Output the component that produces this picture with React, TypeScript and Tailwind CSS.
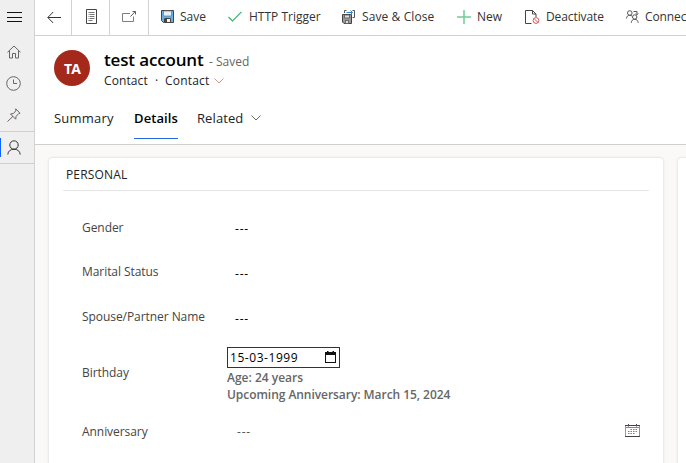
import React from "react";

const Hamburger = () => (
  <svg width="15" height="11" viewBox="0 0 15 11" className="block" shapeRendering="crispEdges">
    <path d="M0 .5h15M0 5.5h15M0 9.5h15" stroke="#111" />
  </svg>
);
const HomeIcon = () => (
  <svg width="14" height="14" viewBox="0 0 14 14" fill="none" stroke="#666" className="block">
    <path d="M.5 7.300 7 1l6.500 6.300M2.500 5.800v7.200h3V8.500h3V13h3V5.800" />
  </svg>
);
const ClockIcon = () => (
  <svg width="15" height="15" viewBox="0 0 15 15" fill="none" stroke="#666" className="block">
    <circle cx="7.500" cy="7.500" r="6.800" />
    <path d="M7.500 3.500v4h3.500" />
  </svg>
);
const PinIcon = () => (
  <svg width="14" height="14" viewBox="0 0 14 14" fill="none" stroke="#6b625f" className="block">
    <path d="M8.700.8 13 5.200l-1.200.3-2.700 2.800-.4 2.900-5.200-5.200 3-.5 2.300-2.700zM6 8.300.5 13.500" />
  </svg>
);
const PersonIcon = () => (
  <svg width="14" height="15" viewBox="0 0 14 15" fill="none" stroke="#333" className="block">
    <circle cx="7" cy="5" r="4.200" />
    <path d="M.8 14.500C1 11.200 3.500 9.200 7 9.200s6 2 6.200 5.300" />
  </svg>
);
const BackIcon = () => (
  <svg width="14" height="12" viewBox="0 0 14 12" fill="none" stroke="#333" className="block">
    <path d="M14 6.500H1M6.200 1 .8 6.500 6.200 12" />
  </svg>
);
const FormIcon = () => (
  <svg width="12" height="15" viewBox="0 0 12 15" fill="none" stroke="#444" className="block">
    <path d="M.5.5h10v14H.5z" />
    <path d="M2.500 3.500h6M2.500 5.500h1M4 5.500h4.500M2.500 7.500h1M4 7.500h4.500M2.500 9.500h1M4 9.500h4.500M2.500 11.500h4" stroke="#777" />
  </svg>
);
const PopoutIcon = () => (
  <svg width="14" height="11" viewBox="0 0 14 11" fill="none" stroke="#605a60" className="block">
    <path d="M8 2.500H.5v8h11V5.500" stroke="#837b80" />
    <path d="M8.500 5.500 13 .8M10.500.5h3V3.500" />
  </svg>
);
const SaveIcon = () => (
  <svg width="13" height="13" viewBox="0 0 13 13" fill="none" className="block">
    <path d="M.5.5h12v12H2.500l-2-2z" fill="#69afe5" stroke="#444" />
    <path d="M2.500 1h8v5h-8z" fill="#e4f0fa" stroke="#777" strokeWidth=".7" />
    <path d="M3.500 8.500h6v4h-6z" fill="#f5f5f5" stroke="#444" />
    <path d="M4 9h2v3.500H4z" fill="#444" />
  </svg>
);
const CheckIcon = () => (
  <svg width="14" height="11" viewBox="0 0 14 11" fill="none" stroke="#33b56a" strokeWidth="1.200" className="block">
    <path d="m.5 6 4 4L13.500.8" />
  </svg>
);
const SaveCloseIcon = () => (
  <svg width="14" height="14" viewBox="0 0 14 14" fill="none" className="block">
    <path d="M.5 4.500h9v9H2l-1.500-1.500z" fill="#999" stroke="#444" />
    <path d="M2.500 5h5v3h-5zM3.500 10.500h3v3h-3z" fill="#ddd" stroke="#555" strokeWidth=".8" />
    <path d="M2.500 3V.5h2M10.500.5h2v7h-2" stroke="#555" />
    <path d="M4.500 2.500h6M8.500.5l2 2-2 2" stroke="#2f83c9" />
  </svg>
);
const PlusIcon = () => (
  <svg width="14" height="14" viewBox="0 0 14 14" className="block">
    <path d="M7 0v14M0 7h14" stroke="#72cb96" strokeWidth="1.500" />
  </svg>
);
const DeactivateIcon = () => (
  <svg width="15" height="14" viewBox="0 0 15 14" fill="none" className="block">
    <path d="M6.500 13.500h-6V.5h7l3.500 3.500v3M7.500.5V4H11" stroke="#444" />
    <circle cx="11" cy="10.500" r="2.900" stroke="#e25555" />
    <path d="m9 8.500 4 4" stroke="#e25555" />
  </svg>
);
const ConnectIcon = () => (
  <svg width="13" height="13" viewBox="0 0 13 13" fill="none" stroke="#555" className="block">
    <circle cx="3.800" cy="3" r="2.300" />
    <path d="M.5 8.500c0-2 1.300-3.200 3.300-3.200 1 0 1.700.3 2.200.8" />
    <circle cx="8.700" cy="7" r="2.200" />
    <path d="M5.300 12.800c.1-2.200 1.400-3.500 3.400-3.500s3.300 1.300 3.500 3.500M7.500 1.500H11v3M9.800 3.500 11 4.800l1.300-1.300" />
  </svg>
);
const Chevron = ({ color }: { color: string }) => (
  <svg width="10" height="6" viewBox="0 0 10 6" fill="none" stroke={color} className="block">
    <path d="M.5.5 5 5 9.500.5" />
  </svg>
);
const DatePickerIcon = () => (
  <svg width="11" height="12" viewBox="0 0 11 12" className="block">
    <path d="M2 0h1.500v1h4V0H9v1h2v11H0V1h2zM1 4v7h9V4z" fill="#111" fillRule="evenodd" />
  </svg>
);
const CalendarIcon = () => (
  <svg width="15" height="13" viewBox="0 0 15 13" fill="none" className="block">
    <path d="M.5 1v12" stroke="#c98f55" />
    <path d="M14.500 1v12" stroke="#5d9fd0" />
    <path d="M0 1.500h15M0 12.500h15" stroke="#444" />
    <path d="M1 3.500h13" stroke="#888" />
    <path d="M3.500 0v2.500M11.500 0v2.500" stroke="#54415c" />
    <path d="M5.500 5.500h7M3 7.500h9.500M3 9.500h7" stroke="#7a7a9a" strokeDasharray="1.500 1" />
  </svg>
);

type CommandProps = { icon: React.ReactNode; label: string; box: string; text: string };
const Command = ({ icon, label, box, text }: CommandProps) => (
  <button className={`flex h-full shrink-0 items-center whitespace-nowrap ${box}`}>
    <span className="w-[19px] shrink-0">{icon}</span>
    <span className={text}>{label}</span>
  </button>
);

type FieldProps = { label: string; row: string; text: string; children: React.ReactNode };
const Field = ({ label, row, text, children }: FieldProps) => (
  <div className={`flex pl-[33px] pr-[23px] ${row}`}>
    <span className={`w-[145px] shrink-0 whitespace-nowrap tracking-[-0.06px] text-[#444] ${text}`}>{label}</span>
    {children}
  </div>
);

export default function App() {
  return (
    <div className="flex h-[463px] w-[686px] overflow-hidden bg-white font-['Open_Sans','Noto_Sans',sans-serif] text-[12px] leading-4 text-[#333]">
      <nav className="flex w-[35px] shrink-0 flex-col border-r border-[#d2d2d2] bg-[#efefef]">
        <div className="flex h-[35px] items-center pl-[7px]"><Hamburger /></div>
        <div className="flex h-[34px] items-center pl-[7px]"><HomeIcon /></div>
        <div className="flex h-7 items-center pl-[6px]"><ClockIcon /></div>
        <div className="flex h-[34px] items-center pl-[7px] pt-px"><PinIcon /></div>
        <div className="flex h-[33px] items-center border-y border-[#cfcfcf]">
          <span className="h-[19px] w-px bg-[#0f62fe]" />
          <span className="pb-px pl-[6px]"><PersonIcon /></span>
        </div>
      </nav>

      <main className="flex w-[651px] shrink-0 flex-col">
        <div className="flex h-9 shrink-0 overflow-hidden border-b border-[#d2d2d2]">
          <div className="flex w-[37px] shrink-0 items-center border-r border-[#d2d2d2] pb-[2px] pl-3"><BackIcon /></div>
          <div className="flex w-[38px] shrink-0 items-center border-r border-[#d2d2d2] pb-[2px] pl-[14px]"><FormIcon /></div>
          <div className="flex w-[39px] shrink-0 items-center border-r border-[#d2d2d2] pb-[2px] pl-3"><PopoutIcon /></div>
          <div className="flex shrink-0 pb-[2px] pl-3">
            <Command icon={<SaveIcon />} label="Save" box="w-[67px]" text="" />
            <Command icon={<CheckIcon />} label="HTTP Trigger" box="w-[114px] gap-[2px]" text="" />
            <Command icon={<SaveCloseIcon />} label="Save & Close" box="w-[115px] gap-px" text="tracking-[0.1px]" />
            <Command icon={<PlusIcon />} label="New" box="w-[68px] gap-px" text="" />
            <Command icon={<DeactivateIcon />} label="Deactivate" box="w-[101px] gap-[2px]" text="tracking-[-0.1px]" />
            <Command icon={<ConnectIcon />} label="Connec" box="w-[62px]" text="tracking-[-0.1px]" />
          </div>
        </div>

        <header className="h-[109px] shrink-0 border-b border-[#cfcfcf] pl-[19px] pt-[14px]">
          <div className="flex h-9">
            <div className="flex size-9 items-center justify-center rounded-full bg-[#a4291b] pt-px text-[14px] font-bold tracking-[-0.8px] text-white">TA</div>
            <div className="ml-[14px] flex flex-col">
              <div className="flex h-5 shrink-0 items-center whitespace-nowrap">
                <h1 className="w-[105px] pb-px text-[17px] font-semibold tracking-[-0.15px] text-black">test account</h1>
                <span className="pt-[3px] text-[#666]">- Saved</span>
              </div>
              <div className="mt-[3px] flex h-4 shrink-0 items-center text-[#222]">
                <span className="w-[51px] tracking-[0.1px]">Contact</span>
                <span className="w-[10px]">·</span>
                <span className="w-[49px] tracking-[0.2px]">Contact</span>
                <Chevron color="#d09a88" />
              </div>
            </div>
          </div>
          <div className="mt-[22px] flex h-[31px] text-[13px] leading-5 text-[#222]">
            <span className="w-20 tracking-[0.2px]">Summary</span>
            <span className="w-11 border-b border-[#2266e3] font-semibold tracking-[0.1px] text-black">Details</span>
            <span className="ml-[19px] w-[54px] tracking-[0.1px]">Related</span>
            <span className="pt-[7px]"><Chevron color="#666" /></span>
          </div>
        </header>

        <div className="flex flex-1 gap-[15px] overflow-hidden bg-[#faf9f8] pl-[14px] pt-[13px]">
          <section className="h-[330px] w-[614px] shrink-0 rounded-[4px] bg-white shadow-[0_0_3px_rgba(0,0,0,0.16)]">
            <h2 className="mx-[14px] h-[33px] border-b border-[#e5e5e5] pl-[3px] pt-[9px] font-medium tracking-[0.15px] text-[#222]">PERSONAL</h2>
            <Field label="Gender" row="h-11 mt-[29px]" text=""><span className="pl-[8px] pt-px tracking-[0.8px] text-black">---</span></Field>
            <Field label="Marital Status" row="h-[45px]" text=""><span className="pl-[8px] pt-[2px] tracking-[0.8px] text-black">---</span></Field>
            <Field label="Spouse/Partner Name" row="h-[38px]" text=""><span className="pl-[8px] pt-[2px] tracking-[0.8px] text-black">---</span></Field>
            <Field label="Birthday" row="h-[76px]" text="pt-[18px]">
              <div className="flex flex-col">
                <div className="flex h-[21px] w-[113px] items-center justify-between border border-[#333] pl-[2px] pr-[3px] text-black">
                  <span className="pt-px tracking-[0.55px]">15-03-1999</span><span className="pb-px"><DatePickerIcon /></span>
                </div>
                <span className="mt-[2px] h-[17px] whitespace-nowrap font-semibold text-[#666]">Age: 24 years</span>
                <span className="whitespace-nowrap font-semibold tracking-[-0.05px] text-[#666]">Upcoming Anniversary: March 15, 2024</span>
              </div>
            </Field>
            <Field label="Anniversary" row="h-5 mt-px" text="">
              <span className="flex-1 pl-[10px] tracking-[0.8px] text-[#555]">---</span><CalendarIcon />
            </Field>
          </section>
          <section className="h-[330px] w-5 shrink-0 rounded-[4px] bg-white shadow-[0_0_3px_rgba(0,0,0,0.16)]" />
        </div>
      </main>
    </div>
  );
}
